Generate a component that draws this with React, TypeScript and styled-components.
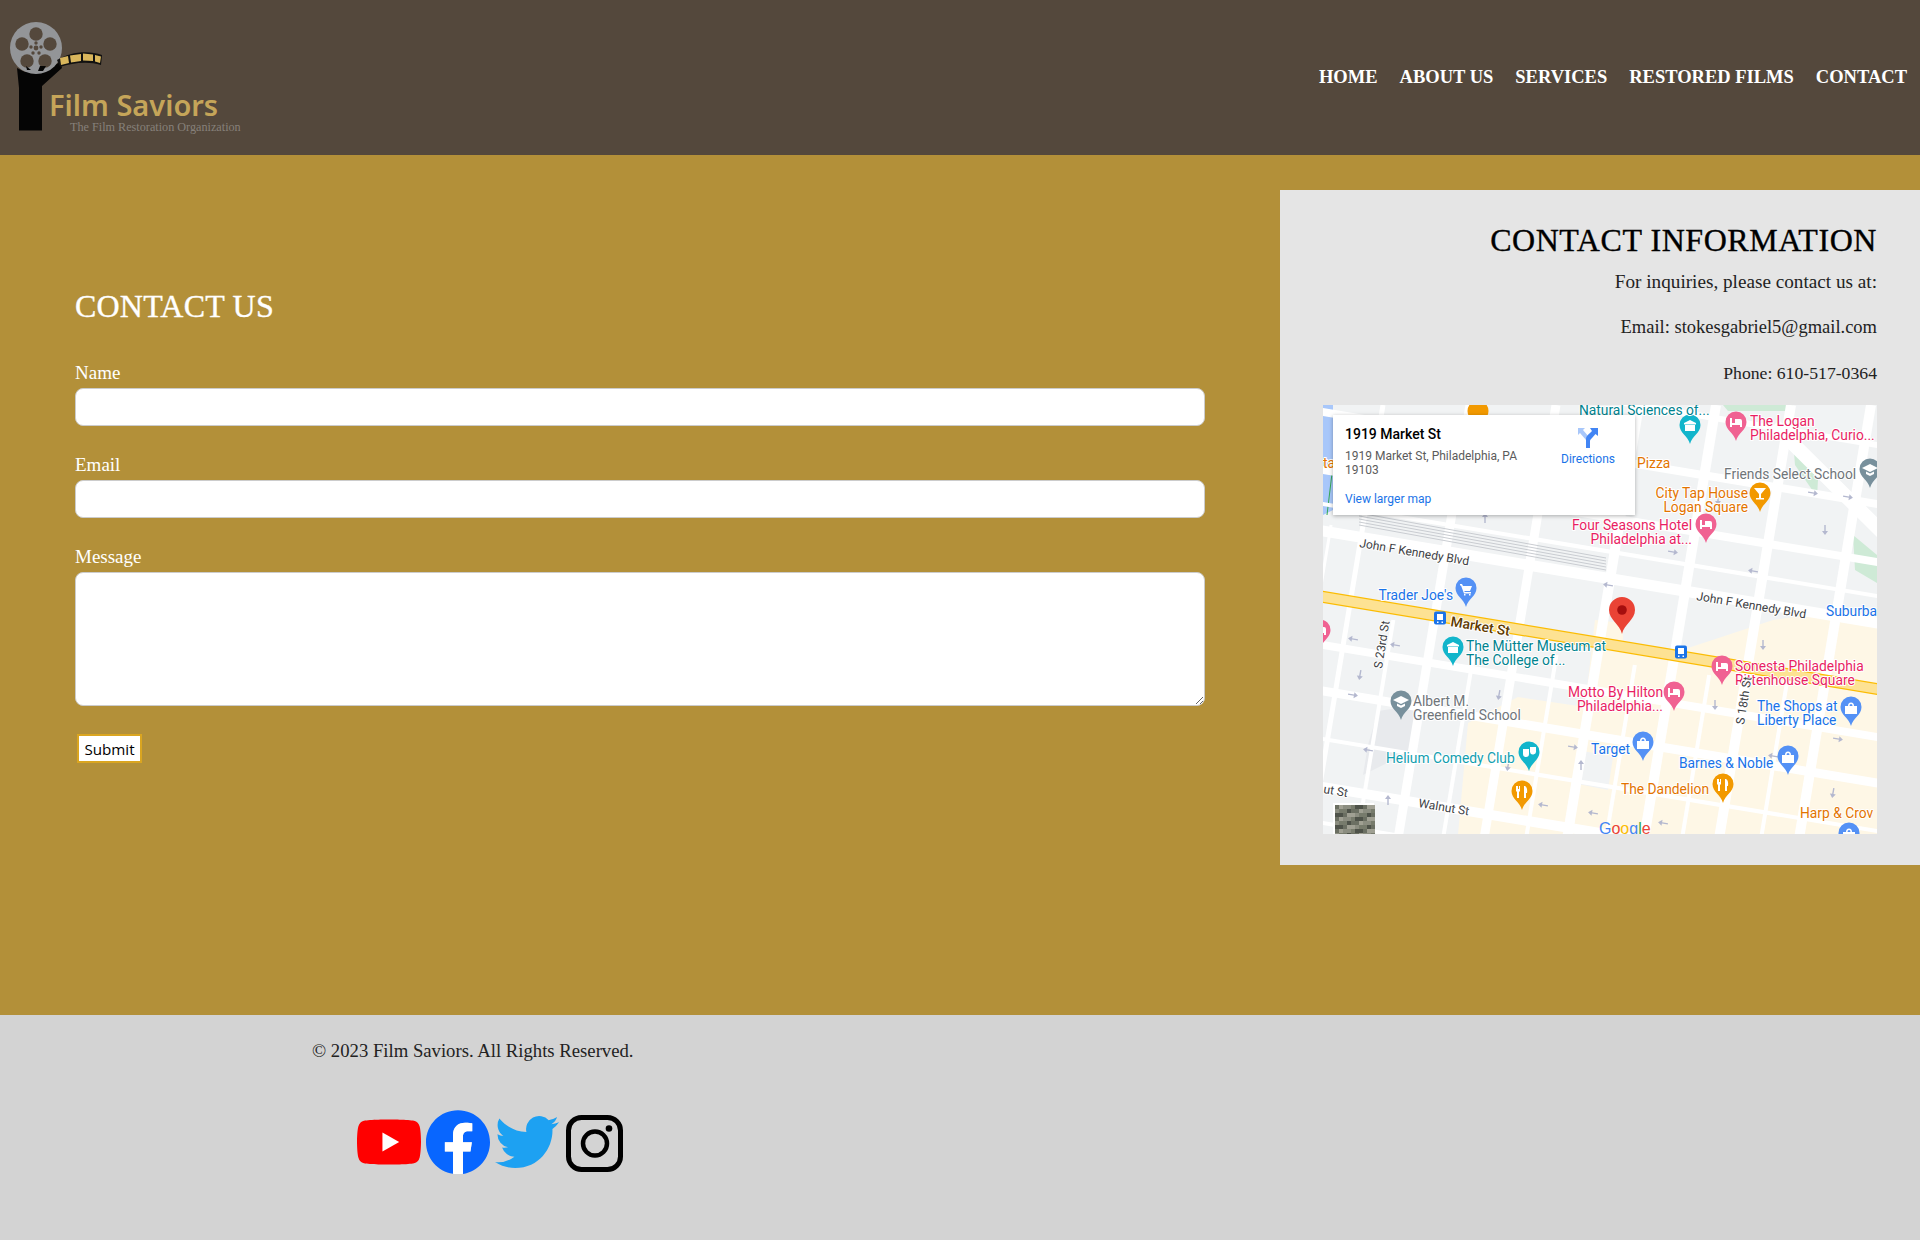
import React from "react";
import styled, { createGlobalStyle } from "styled-components";

const Global = createGlobalStyle`
  * { box-sizing: border-box; }
  html, body { margin: 0; padding: 0; }
  body { font-family: "Liberation Serif", serif; background: #d3d3d3; }
`;

const Page = styled.div`
  width: 1920px;
  height: 1240px;
  display: flex;
  flex-direction: column;
  overflow: hidden;
`;
const Header = styled.header`
  height: 155px;
  flex: none;
  background: #54483c;
  display: flex;
  align-items: center;
  justify-content: space-between;
  padding-right: 13px;
`;
const LogoSvg = styled.svg`
  width: 250px;
  height: 155px;
  display: block;
`;
const LogoName = styled.text`
  font-family: "Noto Sans", sans-serif;
  font-weight: 600;
  font-size: 29px;
  fill: #c5a559;
`;
const LogoTag = styled.text`
  font-family: "Liberation Serif", serif;
  font-size: 12.2px;
  fill: #86807a;
`;
const Nav = styled.nav`
  display: flex;
  gap: 22px;
  margin-top: -1px;
`;
const NavLink = styled.a`
  color: #fff;
  font-size: 18.5px;
  font-weight: 700;
  line-height: 22px;
  text-transform: uppercase;
  white-space: nowrap;
`;
const Main = styled.main`
  height: 860px;
  flex: none;
  background: #b39039;
  display: flex;
  align-items: flex-start;
`;
const FormSection = styled.section`
  width: 1280px;
  padding: 132px 75px 0;
`;
const PageTitle = styled.h2`
  margin: 0 0 40px;
  font-size: 32px;
  line-height: 38px;
  font-weight: 400;
  letter-spacing: 0.2px;
  -webkit-text-stroke: 0.35px #fff;
  color: #fff;
`;
const Field = styled.div`
  margin-bottom: 31px;
`;
const FieldLabel = styled.label`
  display: block;
  height: 23px;
  font-size: 19px;
  line-height: 16px;
  color: #fff;
`;
const TextInput = styled.input`
  display: block;
  width: 100%;
  height: 38px;
  background: #fff;
  border: 1px solid #ccc;
  border-radius: 8px;
`;
const TextArea = styled.textarea`
  display: block;
  width: 100%;
  height: 134px;
  background: #fff;
  border: 1px solid #ccc;
  border-radius: 8px;
`;
const SubmitButton = styled.button`
  display: block;
  width: 65px;
  height: 29px;
  margin: -3px 0 0 2px;
  padding: 0;
  background: #fff;
  border: 2px solid #daa520;
  font-family: "Open Sans", sans-serif;
  font-size: 15.2px;
  color: #000;
`;
const Sidebar = styled.aside`
  width: 640px;
  height: 675px;
  margin-top: 35px;
  padding: 31px 43px 0;
  background: #e5e5e5;
  text-align: right;
`;
const SideTitle = styled.h2`
  margin: 0 0 12px;
  font-size: 32px;
  line-height: 38px;
  font-weight: 400;
  letter-spacing: 0.55px;
  -webkit-text-stroke: 0.35px #000;
  color: #000;
`;
const SideText = styled.p<{ $size: number }>`
  margin: 0 0 25px;
  font-size: ${(p) => p.$size}px;
  line-height: 21px;
  color: #222;
`;
const MapFrame = styled.div`
  position: relative;
  width: 554px;
  height: 429px;
  margin-top: -4px;
  overflow: hidden;
  background: #f1f3f4;
  text-align: left;
`;
const MapSvg = styled.svg`
  display: block;
  width: 554px;
  height: 430px;
`;
const MapLabel = styled.text<{ $c: string; $s?: number; $w?: number }>`
  font-family: Roboto, sans-serif;
  font-size: ${(p) => p.$s ?? 13.8}px;
  font-weight: ${(p) => p.$w ?? 400};
  fill: ${(p) => p.$c};
  stroke: #fff;
  stroke-width: 2px;
  paint-order: stroke;
  stroke-linejoin: round;
`;
const GoogleMark = styled.text`
  font-family: "Liberation Sans", sans-serif;
  font-size: 16px;
  font-weight: 400;
`;
const InfoCard = styled.div`
  position: absolute;
  left: 10px;
  top: 10px;
  width: 302px;
  height: 100px;
  padding: 10px 12px;
  background: #fff;
  box-shadow: 0 1px 4px rgba(0, 0, 0, 0.3);
  font-family: Roboto, sans-serif;
  display: flex;
  justify-content: space-between;
`;
const CardInfo = styled.div`
  width: 190px;
  display: flex;
  flex-direction: column;
`;
const CardTitle = styled.div`
  font-size: 14px;
  line-height: 18px;
  font-weight: 500;
  color: #000;
`;
const CardAddress = styled.div`
  margin-top: 6px;
  font-size: 12px;
  line-height: 14px;
  color: #5b5b5b;
`;
const CardLink = styled.a`
  margin-top: 15px;
  font-size: 12px;
  line-height: 14px;
  color: #1a73e8;
`;
const Directions = styled.div`
  width: 56px;
  margin: 2px 7px 0 0;
  display: flex;
  flex-direction: column;
  align-items: center;
  gap: 3px;
  font-size: 12px;
  line-height: 14px;
  color: #1a73e8;
`;
const Footer = styled.footer`
  flex: 1;
  background: #d3d3d3;
  padding: 24px 0 0 312px;
`;
const Copyright = styled.p`
  margin: 0;
  font-size: 18.7px;
  line-height: 23px;
  color: #222;
`;
const SocialRow = styled.div`
  display: flex;
  gap: 5px;
  margin: 48px 0 0 45px;
`;
const SocialIcon = styled.svg`
  width: 64px;
  height: 64px;
  display: block;
`;

const SLOPE = 0.166;
const hRoads: [number, number][] = [
  [-52, 6], [7, 8], [65, 8], [99, 4], [126, 11], [240, 8], [286, 9], [334, 4], [382, 10], [418, 4],
];
const vRoads: [number, number, number][] = [
  [28, 3, 120], [60, 5, 0], [106, 4, 215], [147, 9, 0], [192, 4, 235], [233, 9, 0], [275, 4, 250], [316, 10, 0],
  [355, 4, 260], [393, 10, 0], [431, 4, 270], [468, 10, 0], [510, 4, 280], [548, 10, 0],
];

const PIN = "M0 18C-2 10-10.5 7-10.5-1a10.5 10.5 0 1 1 21 0C10.5 7 2 10 0 18Z";
const glyphs: Record<string, React.ReactNode> = {
  bed: <path d="M-6 4V-5h2v5h3v-4h5a2 2 0 0 1 2 2v6H4V2h-8v2Z" fill="#fff" />,
  cart: <path d="M-6-5h2l1 2h9l-2 5h-6l1 1h6v1.500h-7L-5-3.500H-6ZM-2 5h1.500v1.500H-2ZM3 5h1.500v1.500H3Z" fill="#fff" />,
  school: <path d="M0-6l8 4-8 4-8-4ZM-4 1.500l4 2 4-2V4l-4 2-4-2Z" fill="#fff" />,
  bag: <path d="M-6-2h12v8h-12ZM-3-2a3 3.500 0 0 1 6 0H1.500a1.500 2 0 0 0-3 0Z" fill="#fff" />,
  fork: <path d="M-5-6h1v3h1v-3h1v5l-1 1v6h-2V0l-1-1v-5ZM3-6c2 1 2.500 4 2 7H4v5H2V-6Z" fill="#fff" />,
  glass: <path d="M-6-6H6L1 0v4h3v1.500h-8V4h3V0Z" fill="#fff" />,
  museum: <path d="M0-6l6 3v1.500h-12V-3ZM-5-1h10v6h-10Z" fill="#fff" />,
  mask: <path d="M-6-4h6v5a3 3 0 0 1-6 0ZM1-6h6v4a3 3 0 0 1-6 1Z" fill="#fff" />,
};
const pins: [number, number, string, string][] = [
  [155, 7, "#f29900", ""],
  [367, 21, "#12b5cb", "museum"],
  [413, 18, "#f06292", "bed"],
  [547, 65, "#78909c", "school"],
  [437, 89, "#f29900", "glass"],
  [383, 120, "#f06292", "bed"],
  [143, 184, "#5491f5", "cart"],
  [-3, 226, "#f06292", "bed"],
  [130, 243, "#12b5cb", "museum"],
  [399, 262, "#f06292", "bed"],
  [351, 288, "#f06292", "bed"],
  [78, 297, "#78909c", "school"],
  [528, 303, "#5491f5", "bag"],
  [320, 338, "#5491f5", "bag"],
  [206, 348, "#12b5cb", "mask"],
  [465, 352, "#5491f5", "bag"],
  [400, 380, "#f29900", "fork"],
  [199, 387, "#f29900", "fork"],
  [526, 429, "#5491f5", "bag"],
];
const labels: [string, number, number, string, ("end" | "start")?][] = [
  ["Natural Sciences of...", 256, 9.5, "#00838f"],
  ["The Logan", 427, 21, "#e91e63"],
  ["Philadelphia, Curio...", 427, 34.5, "#e91e63"],
  ["ta", 0, 63, "#e37400"],
  ["Pizza", 314, 63, "#e37400"],
  ["Friends Select School", 401, 73.5, "#70757a"],
  ["City Tap House", 425, 93, "#e37400", "end"],
  ["Logan Square", 425, 106.5, "#e37400", "end"],
  ["Four Seasons Hotel", 369, 125, "#e91e63", "end"],
  ["Philadelphia at...", 369, 138.5, "#e91e63", "end"],
  ["Trader Joe's", 130, 194.5, "#1a73e8", "end"],
  ["Suburba", 503, 210.5, "#1a73e8"],
  ["The Mütter Museum at", 143, 246, "#00838f"],
  ["The College of...", 143, 259.5, "#00838f"],
  ["Sonesta Philadelphia", 412, 266, "#e91e63"],
  ["Rittenhouse Square", 412, 279.5, "#e91e63"],
  ["Motto By Hilton", 340, 292, "#e91e63", "end"],
  ["Philadelphia...", 340, 306, "#e91e63", "end"],
  ["Albert M.", 90, 301, "#70757a"],
  ["Greenfield School", 90, 315, "#70757a"],
  ["The Shops at", 434, 306, "#1a73e8"],
  ["Liberty Place", 434, 320, "#1a73e8"],
  ["Target", 268, 349, "#1a73e8"],
  ["Helium Comedy Club", 63, 357.5, "#129eaf"],
  ["Barnes & Noble", 356, 362.5, "#1a73e8"],
  ["The Dandelion", 298, 389, "#e37400"],
  ["Harp & Crov", 477, 413, "#e37400"],
];
const roadNames: [string, number, number, number][] = [
  ["John F Kennedy Blvd", 36, 142, 9.5],
  ["John F Kennedy Blvd", 373, 195, 9.5],
  ["Walnut St", 95, 402, 9.5],
  ["ut St", 0, 388, 9.5],
  ["S 23rd St", 59, 264, -81],
  ["S 18th St", 421, 320, -81],
];
const arrows: [number, number, number][] = [
  [490, 88, 10], [525, 92, 10], [350, 147, 10], [430, 166, 190], [285, 180, 190], [395, 95, 90], [502, 125, 90],
  [205, 100, 90], [162, 113, 270], [30, 234, 190], [72, 240, 190], [37, 270, 100], [176, 290, 100], [130, 250, 270],
  [30, 290, 10], [45, 345, 190], [250, 342, 10], [258, 360, 270], [392, 300, 90], [450, 351, 190], [510, 388, 100],
  [515, 334, 10], [65, 395, 270], [185, 361, 100], [220, 400, 190], [270, 408, 190], [340, 418, 190], [440, 240, 90],
];
const satCells = Array.from({ length: 90 }, (_, i) => ({
  x: 12 + (i % 10) * 4,
  y: 400 + Math.floor(i / 10) * 4,
  f: ["#6b6f62", "#8b8d80", "#4e5249", "#a0a093", "#777b6c"][(i * 7 + (i % 3)) % 5],
}));

const MapDrawing = () => (
  <MapSvg viewBox="0 0 554 430">
    <rect width="554" height="430" fill="#f1f3f4" />
    <path d="M0 0H10V105L0 110Z" fill="#a8c7fa" />
    <path d="M4 110L10 60" stroke="#34a853" strokeWidth="1" />
    <path d="M470 35L496 58 494 92 472 60ZM530 130L554 150V178L532 165ZM400 0H470L462 6H405Z" fill="#ceead6" />
    <path
      d="M135 430L145 318 195 292 262 302 272 215 300 218 300 240 350 248 450 215 520 205 554 210V430Z"
      fill="#fef7e6"
    />
    <path d="M55 306L95 300 90 345 40 370 45 340Z" fill="#e8eaed" />
    <path d="M300 220L345 228 342 245 300 238ZM255 345L290 352 285 385 250 378Z" fill="#f1f3f4" />
    {hRoads.map(([y, w]) => (
      <line key={y} x1="-5" y1={y - 0.8} x2="560" y2={y + 560 * SLOPE} stroke="#fff" strokeWidth={w} />
    ))}
    {vRoads.map(([x, w, from]) => (
      <line
        key={x}
        x1={x - from * SLOPE}
        y1={from}
        x2={x - 432 * SLOPE}
        y2="432"
        stroke="#fff"
        strokeWidth={w}
      />
    ))}
    <line x1="451" y1="20" x2="560" y2="128" stroke="#fff" strokeWidth="14" />
    {[0, 3, 6, 9, 12].map((d) => (
      <line key={d} x1="36" y1={108 + d} x2="283" y2={153 + d} stroke="#c9ccd1" strokeWidth="1" />
    ))}
    <line x1="-5" y1="191" x2="560" y2="285" stroke="#fbbc04" strokeWidth="12" />
    <line x1="-5" y1="191" x2="560" y2="285" stroke="#fde293" strokeWidth="9.500" />
    {arrows.map(([x, y, a], i) => (
      <path
        key={i}
        transform={`translate(${x} ${y}) rotate(${a})`}
        d="M-5-.7H1V-3L5 0 1 3V.7H-5Z"
        fill="#b4b8cf"
      />
    ))}
    {pins.map(([x, y, c, g], i) => (
      <g key={i} transform={`translate(${x} ${y})`}>
        <path d={PIN} fill={c} />
        {glyphs[g]}
      </g>
    ))}
    <g transform="translate(299 205)">
      <path d="M0 24C-2 14-13 10-13 0a13 13 0 1 1 26 0C13 10 2 14 0 24Z" fill="#ea4335" />
      <circle r="4.800" fill="#a50e0e" />
    </g>
    {[[117, 213], [358, 247]].map(([x, y]) => (
      <g key={x} transform={`translate(${x} ${y})`}>
        <rect x="-6" y="-6.500" width="12" height="13" rx="2" fill="#1a73e8" />
        <path d="M-3-4h6v6h-6ZM-3 3.500h1.500v1.500H-3ZM1.500 3.500H3v1.500H1.500Z" fill="#fff" />
      </g>
    ))}
    {labels.map(([t, x, y, c, a]) => (
      <MapLabel key={t + x + y} x={x} y={y} $c={c} textAnchor={a ?? "start"}>
        {t}
      </MapLabel>
    ))}
    <MapLabel $c="#5f3a00" $w={500} transform="translate(127 221) rotate(9.500)">
      Market St
    </MapLabel>
    {roadNames.map(([t, x, y, r]) => (
      <MapLabel key={t + x} $c="#3c4043" $s={12} transform={`translate(${x} ${y}) rotate(${r})`}>
        {t}
      </MapLabel>
    ))}
    <rect x="10" y="398" width="41" height="40" fill="#fff" />
    {satCells.map((c, i) => (
      <rect key={i} x={c.x} y={c.y} width="4" height="4" fill={c.f} />
    ))}
    <GoogleMark x="276" y="429">
      <tspan fill="#4285f4">G</tspan>
      <tspan fill="#ea4335">o</tspan>
      <tspan fill="#fbbc04">o</tspan>
      <tspan fill="#4285f4">g</tspan>
      <tspan fill="#34a853">l</tspan>
      <tspan fill="#ea4335">e</tspan>
    </GoogleMark>
  </MapSvg>
);

const Logo = () => (
  <LogoSvg viewBox="0 0 250 155">
    <path d="M17 68L25 72 43 72 60 62 62 68 42 86V130.500H19V88Z" fill="#050505" />
    <circle cx="36" cy="48" r="26" fill="#939598" />
    <g fill="#54483c">
      <circle cx="36" cy="34" r="6.700" />
      <circle cx="50" cy="44" r="6.700" />
      <circle cx="45" cy="61" r="6.700" />
      <circle cx="27" cy="61" r="6.700" />
      <circle cx="22" cy="44" r="6.700" />
      <circle cx="36" cy="48" r="2.400" />
      <circle cx="36" cy="43" r="1.700" />
      <circle cx="41" cy="47" r="1.700" />
      <circle cx="39" cy="53" r="1.700" />
      <circle cx="33" cy="53" r="1.700" />
      <circle cx="31" cy="47" r="1.700" />
    </g>
    <path d="M26 66L31 70 27 70ZM40 66H46L43 71H38Z" fill="#050505" />
    <path d="M57 60C70 52 88 50 102 55L101 65C88 61 72 63 60 67Z" fill="#111" />
    <path d="M60 58L68 56 69 63 61 65ZM70 55.500L81 54 81 61 71 62.500ZM83 53.500L93 54.500 93 61 83 60.500ZM95 55L101 56.500 100 63 95 61.500Z" fill="#d9b65c" />
    <LogoName x="49" y="116">Film Saviors</LogoName>
    <LogoTag x="70" y="131">The Film Restoration Organization</LogoTag>
  </LogoSvg>
);

export default function App() {
  return (
    <Page>
      <Global />
      <Header>
        <Logo />
        <Nav>
          {["Home", "About Us", "Services", "Restored Films", "Contact"].map((n) => (
            <NavLink key={n}>{n}</NavLink>
          ))}
        </Nav>
      </Header>
      <Main>
        <FormSection>
          <PageTitle>CONTACT US</PageTitle>
          <Field>
            <FieldLabel>Name</FieldLabel>
            <TextInput />
          </Field>
          <Field>
            <FieldLabel>Email</FieldLabel>
            <TextInput />
          </Field>
          <Field>
            <FieldLabel>Message</FieldLabel>
            <TextArea />
          </Field>
          <SubmitButton>Submit</SubmitButton>
        </FormSection>
        <Sidebar>
          <SideTitle>CONTACT INFORMATION</SideTitle>
          <SideText $size={19.2}>For inquiries, please contact us at:</SideText>
          <SideText $size={18.5}>Email: stokesgabriel5@gmail.com</SideText>
          <SideText $size={17.7}>Phone: 610-517-0364</SideText>
          <MapFrame>
            <MapDrawing />
            <InfoCard>
              <CardInfo>
                <CardTitle>1919 Market St</CardTitle>
                <CardAddress>1919 Market St, Philadelphia, PA 19103</CardAddress>
                <CardLink>View larger map</CardLink>
              </CardInfo>
              <Directions>
                <svg width="22" height="22" viewBox="0 0 22 22">
                  <path d="M9 21V13L3 6 1 8V1H8L6 3 12 10V21Z" fill="#a8c7fa" />
                  <path d="M9 21V12C9 9 11 8 13 6L15 4 13 1H21V9L18.500 7 15 11C13 13 13 13 13 15V21Z" fill="#4285f4" />
                </svg>
                <span>Directions</span>
              </Directions>
            </InfoCard>
          </MapFrame>
        </Sidebar>
      </Main>
      <Footer>
        <Copyright>© 2023 Film Saviors. All Rights Reserved.</Copyright>
        <SocialRow>
          <SocialIcon viewBox="0 0 24 24">
            <path
              fill="#f00"
              d="M23.498 6.186a3.016 3.016 0 0 0-2.122-2.136C19.505 3.545 12 3.545 12 3.545s-7.505 0-9.377.505A3.017 3.017 0 0 0 .502 6.186C0 8.070 0 12 0 12s0 3.930.502 5.814a3.016 3.016 0 0 0 2.122 2.136c1.871.505 9.376.505 9.376.505s7.505 0 9.377-.505a3.015 3.015 0 0 0 2.122-2.136C24 15.930 24 12 24 12s0-3.930-.502-5.814z"
            />
            <path fill="#fff" d="M9.545 15.568V8.432L15.818 12z" />
          </SocialIcon>
          <SocialIcon viewBox="0 0 24 24">
            <path
              fill="#0866ff"
              d="M24 12.073c0-6.627-5.373-12-12-12s-12 5.373-12 12c0 5.990 4.388 10.954 10.125 11.854v-8.385H7.078v-3.470h3.047V9.430c0-3.007 1.792-4.615 4.533-4.615 1.312 0 2.686.235 2.686.235v2.953H15.830c-1.491 0-1.956.925-1.956 1.874v2.250h3.328l-.532 3.470h-2.796v8.385C19.612 23.027 24 18.062 24 12.073z"
            />
            <path
              fill="#fff"
              d="M16.671 15.543l.532-3.470h-3.328v-2.250c0-.949.465-1.874 1.956-1.874h1.513V5.050s-1.374-.235-2.686-.235c-2.741 0-4.533 1.608-4.533 4.615v2.643H7.078v3.470h3.047v8.385a12.090 12.090 0 003.750 0v-8.385h2.796z"
            />
          </SocialIcon>
          <SocialIcon viewBox="0 0 24 24">
            <path
              fill="#1da1f2"
              d="M23.953 4.570a10 10 0 01-2.825.775 4.958 4.958 0 002.163-2.723c-.951.555-2.005.959-3.127 1.184a4.920 4.920 0 00-8.384 4.482C7.690 8.095 4.067 6.130 1.640 3.162a4.822 4.822 0 00-.666 2.475c0 1.710.870 3.213 2.188 4.096a4.904 4.904 0 01-2.228-.616v.060a4.923 4.923 0 003.946 4.827 4.996 4.996 0 01-2.212.085 4.936 4.936 0 004.604 3.417 9.867 9.867 0 01-6.102 2.105c-.390 0-.779-.023-1.170-.067a13.995 13.995 0 007.557 2.209c9.053 0 13.998-7.496 13.998-13.985 0-.210 0-.420-.015-.630A9.935 9.935 0 0024 4.590z"
            />
          </SocialIcon>
          <SocialIcon viewBox="0 0 64 64">
            <rect x="4.500" y="7.500" width="52" height="52" rx="13" fill="none" stroke="#000" strokeWidth="5" />
            <circle cx="31" cy="33.500" r="12" fill="none" stroke="#000" strokeWidth="4.500" />
            <circle cx="45" cy="18.500" r="3.300" fill="#000" />
          </SocialIcon>
        </SocialRow>
      </Footer>
    </Page>
  );
}
